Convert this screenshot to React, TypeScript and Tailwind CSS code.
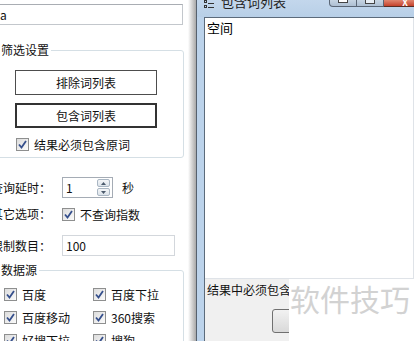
import * as React from "react";

const font = { fontFamily: '"Noto Sans CJK SC", "Liberation Sans", sans-serif' };

// Win7 style checked checkbox
function Check() {
  return (
    <span className="inline-flex h-[13px] w-[13px] shrink-0 items-center justify-center border border-[#8e8f8f] bg-gradient-to-br from-[#dcdcdc] to-[#fbfbfb]">
      <svg width="9" height="9" viewBox="0 0 9 9">
        <path d="M1 4.5 L3.5 7.5 L8 1" fill="none" stroke="#354f8c" strokeWidth="1.8" />
      </svg>
    </span>
  );
}

function CheckRow({ label, className = "" }: { label: string; className?: string }) {
  return (
    <div className={"flex items-center gap-[5px] " + className}>
      <Check />
      <span className="leading-[13px]">{label}</span>
    </div>
  );
}

function LeftPanel() {
  return (
    <div className="relative h-full w-[188px] shrink-0 overflow-hidden bg-white text-[12px] text-[#111]">
      <div className="ml-[-20px] flex w-[210px] flex-col">
        {/* top textbox */}
        <div className="mt-[4px] flex h-[21px] w-[203px] items-center border border-[#c3c7cc] border-t-[#a9adb3] pl-[19px] leading-none">
          a
        </div>

        {/* 筛选设置 */}
        <fieldset className="mt-[18px] h-[115px] w-[204px] rounded-[3px] border border-[#d5dfe5]">
          <legend className="ml-[18px] px-[2px] text-[12px] leading-[14px]">筛选设置</legend>
          <div className="flex flex-col pl-[34px] pt-[13px]">
            <button className="h-[25px] w-[142px] border border-[#4d4d4d] bg-white text-[12px] leading-none">
              排除词列表
            </button>
            <button className="mt-[8px] h-[25px] w-[142px] border-2 border-[#333] bg-white text-[12px] leading-none">
              包含词列表
            </button>
            <CheckRow label="结果必须包含原词" className="mt-[10px] ml-[1px]" />
          </div>
        </fieldset>

        {/* options */}
        <div className="mt-[19px] flex items-center">
          <span className="ml-[11px] w-[60px]">查询延时：</span>
          <div className="ml-[11px] flex h-[21px] w-[51px] items-center border border-[#a5acb5] bg-white">
            <span className="flex-1 pl-[3px] leading-none">1</span>
            <div className="mr-[2px] flex h-[17px] w-[13px] flex-col gap-[1px]">
              <span className="flex flex-1 items-center justify-center rounded-[2px] border border-[#a9b6c3] bg-gradient-to-b from-[#f4f6f8] to-[#dce3ea]">
                <svg width="5" height="3" viewBox="0 0 5 3"><path d="M0 3 L2.5 0 L5 3Z" fill="#4b5a6c" /></svg>
              </span>
              <span className="flex flex-1 items-center justify-center rounded-[2px] border border-[#a9b6c3] bg-gradient-to-b from-[#f4f6f8] to-[#dce3ea]">
                <svg width="5" height="3" viewBox="0 0 5 3"><path d="M0 0 L2.5 3 L5 0Z" fill="#4b5a6c" /></svg>
              </span>
            </div>
          </div>
          <span className="ml-[9px]">秒</span>
        </div>

        <div className="mt-[7px] flex items-center">
          <span className="ml-[11px] w-[60px]">其它选项：</span>
          <CheckRow label="不查询指数" className="ml-[11px]" />
        </div>

        <div className="mt-[12px] flex items-center">
          <span className="ml-[11px] w-[60px]">限制数目：</span>
          <div className="ml-[11px] flex h-[21px] w-[113px] items-center border border-[#d3d7dc] bg-white pl-[3px] leading-none">
            100
          </div>
        </div>

        {/* 数据源 */}
        <fieldset className="mt-[7px] h-[100px] w-[204px] rounded-[3px] border border-[#d5dfe5]">
          <legend className="ml-[18px] px-[2px] text-[12px] leading-[14px]">数据源</legend>
          <div className="grid grid-cols-[89px_1fr] gap-y-[10px] pl-[23px] pt-[11px]">
            <CheckRow label="百度" />
            <CheckRow label="百度下拉" />
            <CheckRow label="百度移动" />
            <CheckRow label="360搜索" />
            <CheckRow label="好搜下拉" />
            <CheckRow label="搜狗" />
          </div>
        </fieldset>
      </div>
    </div>
  );
}

function TitleIcon() {
  return (
    <svg width="10" height="9" viewBox="0 0 10 9">
      <rect x="0.5" y="0.5" width="2" height="2" fill="none" stroke="#333" />
      <rect x="0.5" y="5.5" width="2" height="2" fill="none" stroke="#333" />
      <path d="M4 3.5 H10 M4 7.5 H10" stroke="#333" />
    </svg>
  );
}

function ListWindow() {
  return (
    <div className="relative flex h-full flex-1 flex-col border-l border-[#56616e] bg-[#bcd3eb]">
      {/* title bar */}
      <div className="flex h-[17px] shrink-0 items-start bg-gradient-to-b from-[#c3d7ec] to-[#b8cfe7]">
        <div className="ml-[7px] mt-[0px]">
          <TitleIcon />
        </div>
        <span className="ml-[7px] mt-[-6px] text-[13px] leading-[15px] text-[#222]">包含词列表</span>
        <div className="ml-auto flex h-[7px]">
          <div className="flex w-[28px] justify-center rounded-bl-[4px] border border-t-0 border-[#5a6675] bg-gradient-to-b from-[#c6d4e2] to-[#aebfd2]">
            <span className="h-[3px] w-[10px] border border-t-0 border-[#444] bg-white" />
          </div>
          <div className="flex w-[27px] justify-center border border-l-0 border-t-0 border-[#5a6675] bg-gradient-to-b from-[#c6d4e2] to-[#aebfd2]">
            <span className="h-[4px] w-[10px] border border-t-0 border-[#444] bg-[#e8eef4]" />
          </div>
          <div className="flex w-[30px] justify-end border-b border-[#5a2c22] bg-gradient-to-b from-[#e0856f] to-[#c4402a] pr-[6px]">
            <span className="text-[9px] font-bold leading-[5px] text-white">X</span>
          </div>
        </div>
      </div>
      {/* client area */}
      <div className="ml-[7px] flex flex-1 flex-col border-l border-t border-[#5c6b7b] bg-[#f0f0f0]">
        <div className="h-[261px] border-b border-r border-[#dfe3e8] bg-white px-[2px] pt-[2px] text-[13px] leading-[15px] text-black">
          空间
        </div>
        <div className="pl-[2px] pt-[4px] text-[12px] leading-[14px] text-[#111]">结果中必须包含原词</div>
        <div className="ml-[67px] mt-[12px] h-[24px] w-[80px] rounded-[3px] border border-[#707070] bg-gradient-to-b from-[#f2f2f2] to-[#d9d9d9]" />
      </div>
      {/* watermark */}
      <div className="absolute bottom-0 right-0 h-[62px] w-[125px] bg-white pl-[1px] pt-[1px] text-[30px] leading-[36px] tracking-[0px] text-[#d2d2d2]">
        软件技巧
      </div>
    </div>
  );
}

export default function App() {
  return (
    <div className="flex h-[341px] w-[414px] overflow-hidden bg-white" style={font}>
      <LeftPanel />
      <div className="h-full w-[8px] shrink-0 bg-gradient-to-r from-white to-[#a9a9a9]" />
      <ListWindow />
    </div>
  );
}
